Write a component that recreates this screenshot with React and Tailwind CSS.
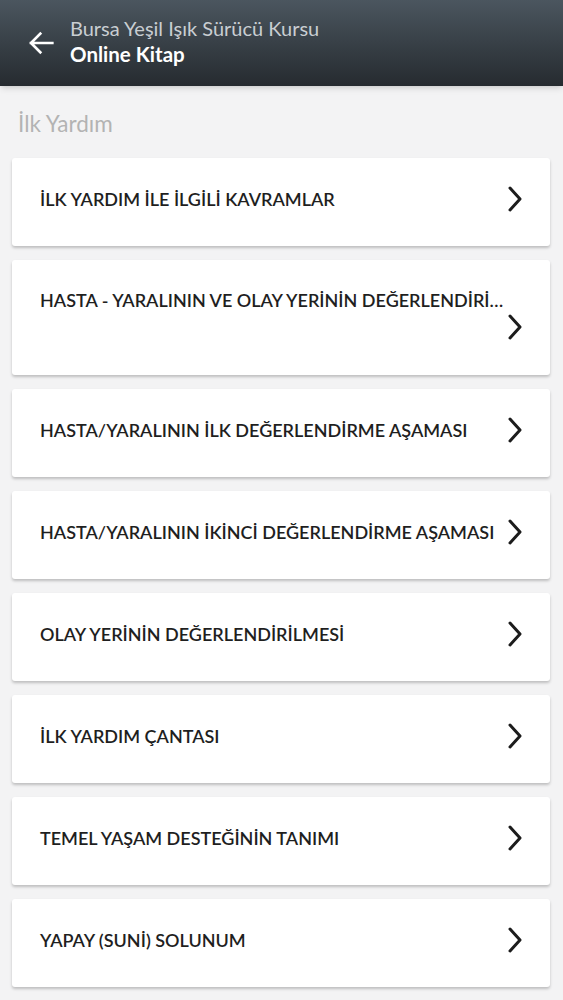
import React from 'react';

const items = [
  'İLK YARDIM İLE İLGİLİ KAVRAMLAR',
  'HASTA - YARALININ VE OLAY YERİNİN DEĞERLENDİRİLMESİ',
  'HASTA/YARALININ İLK DEĞERLENDİRME AŞAMASI',
  'HASTA/YARALININ İKİNCİ DEĞERLENDİRME AŞAMASI',
  'OLAY YERİNİN DEĞERLENDİRİLMESİ',
  'İLK YARDIM ÇANTASI',
  'TEMEL YAŞAM DESTEĞİNİN TANIMI',
  'YAPAY (SUNİ) SOLUNUM',
];

const Chevron = () => (
  <svg width="16" height="26" viewBox="0 0 16 26" fill="none" className="shrink-0">
    <path d="M3 2 L13 13 L3 24" stroke="#1c1c1c" strokeWidth="3" strokeLinecap="round" strokeLinejoin="round" />
  </svg>
);

const App = () => {
  return (
    <div className="min-h-screen bg-[#f3f3f4]" style={{ fontFamily: 'Lato, "Noto Sans", sans-serif' }}>
      {/* header */}
      <div className="h-[86px] flex items-center bg-gradient-to-b from-[#4b565f] to-[#262b30] shadow-md">
        <button className="ml-[25px] mr-[13px] text-white">
          <svg width="32" height="32" viewBox="0 0 24 24" fill="none">
            <path d="M20.5 12H4.5M11.5 5l-7 7 7 7" stroke="#fff" strokeWidth="2" strokeLinecap="square" />
          </svg>
        </button>
        <div className="flex flex-col -mt-[3px]">
          <span className="text-[20px] leading-[24px] text-[#c9ced2]">Bursa Yeşil Işık Sürücü Kursu</span>
          <span className="text-[20.5px] leading-[28px] font-bold text-white">Online Kitap</span>
        </div>
      </div>

      <div className="px-[18px] pt-[24px] pb-[20px] text-[22.5px] leading-[28px] text-[#b3b3b3]">İlk Yardım</div>

      <div className="flex flex-col gap-[14px] pl-[12px] pr-[13px] pb-[12px]">
        {items.map((t, i) =>
          i === 1 ? (
            <div key={i} className="bg-white rounded-[3px] shadow-[0_2px_3px_rgba(0,0,0,0.22)] h-[115px] pl-[28px] pr-[28px] pt-[28px]">
              <div className="truncate pr-[14px] text-[18px] leading-[24px] font-semibold text-[#1f1f1f]">{t}</div>
              <div className="flex justify-end mt-[2px] -mr-[1px]">
                <Chevron />
              </div>
            </div>
          ) : (
            <div key={i} className="bg-white rounded-[3px] shadow-[0_2px_3px_rgba(0,0,0,0.22)] h-[88px] pl-[28px] pr-[27px] pb-[6px] flex items-center justify-between gap-1">
              <span className="text-[18px] leading-[24px] font-semibold text-[#1f1f1f] whitespace-nowrap">{t}</span>
              <Chevron />
            </div>
          )
        )}
      </div>
    </div>
  );
};

export default App;
